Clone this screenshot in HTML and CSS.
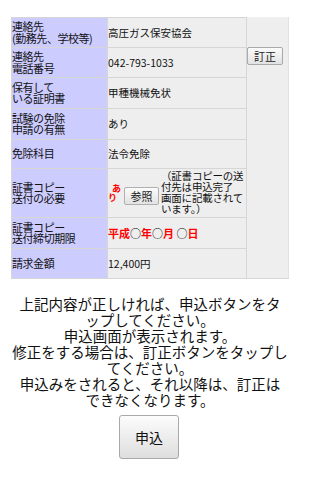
FILE: index.html
```html
<!DOCTYPE html>
<html lang="ja">
<head>
<meta charset="utf-8">
<link rel="stylesheet" href="styles.css">
</head>
<body>
<div class="page">
  <table class="info">
    <tr class="h30">
      <th>連絡先
(勤務先、学校等)</th>
      <td class="val">高圧ガス保安協会</td>
      <td class="side" rowspan="8"><button class="fix">訂正</button></td>
    </tr>
    <tr class="h30">
      <th>連絡先
電話番号</th>
      <td class="val">042-793-1033</td>
    </tr>
    <tr class="h31">
      <th>保有して
いる証明書</th>
      <td class="val">甲種機械免状</td>
    </tr>
    <tr class="h31">
      <th>試験の免除
申請の有無</th>
      <td class="val">あり</td>
    </tr>
    <tr class="h29">
      <th>免除科目</th>
      <td class="val">法令免除</td>
    </tr>
    <tr class="h49">
      <th>証書コピー
送付の必要</th>
      <td class="val">
        <div class="copy">
          <span class="ari">あり</span>
          <button class="ref">参照</button>
          <span class="note">（証書コピーの送
付先は申込完了
画面に記載されて
います。）</span>
        </div>
      </td>
    </tr>
    <tr class="h31">
      <th>証書コピー
送付締切期限</th>
      <td class="val"><span class="date">平成<span class="c">○</span>年<span class="c">○</span>月 <span class="c">○</span>日</span></td>
    </tr>
    <tr class="h30">
      <th>請求金額</th>
      <td class="val">12,400円</td>
    </tr>
  </table>

  <p class="msg">上記内容が正しければ、申込ボタンをタ
ップしてください。
申込画面が表示されます。
修正をする場合は、訂正ボタンをタップし
てください。
申込みをされると、それ以降は、訂正は
できなくなります。</p>

  <div class="actions">
    <button class="apply">申込</button>
  </div>
</div>
</body>
</html>
```

FILE: styles.css
```css
html, body {
  margin: 0;
  padding: 0;
  background: #ffffff;
}
body {
  font-family: "Noto Sans CJK JP", "Noto Sans", sans-serif;
  color: #111;
}
.page {
  width: 300px;
  padding-top: 17px;
}
.info {
  margin-left: 11px;
  border-collapse: collapse;
  width: 277px;
  table-layout: fixed;
  font-size: 10.5px;
  line-height: 12px;
}
.info th, .info td {
  border: 1px solid #d6d6d6;
  padding: 0;
}
.info th {
  width: 95px;
  background: #ccccff;
  font-weight: normal;
  font-size: 11px;
  line-height: 11.5px;
  text-align: left;
  vertical-align: middle;
  white-space: pre;
  letter-spacing: -0.45px;
}
.info td.val {
  width: 138px;
  background: #eeeeee;
  vertical-align: middle;
  white-space: nowrap;
}
.info td.side {
  width: 41px;
  background: #eeeeee;
  vertical-align: top;
  padding-top: 29px;
  border-top-color: #eeeeee;
  border-right-color: #e2e2e2;
}
tr.h29 th, tr.h29 td.val { height: 28px; }
tr.h30 th, tr.h30 td.val { height: 29px; }
tr.h31 th, tr.h31 td.val { height: 30px; }
tr.h49 th, tr.h49 td.val { height: 48px; }

.fix {
  display: block;
  width: 36px;
  height: 18px;
  padding: 0;
  font: inherit;
  font-size: 11px;
  line-height: 16px;
  color: #222;
  background: linear-gradient(#fbfbfb, #e2e2e2);
  border: 1px solid #a9a9a9;
  border-radius: 2px;
}

.copy {
  display: flex;
  align-items: center;
  height: 48px;
}
.ari {
  display: block;
  width: 9px;
  margin-right: 7px;
  white-space: normal;
  text-indent: 4px;
  color: #ff0000;
  font-weight: bold;
  font-size: 9px;
  line-height: 9px;
}
.ref {
  width: 35px;
  height: 18px;
  padding: 0;
  margin: 5px 2px 0 0;
  font: inherit;
  font-size: 11px;
  line-height: 16px;
  color: #222;
  background: linear-gradient(#fbfbfb, #e2e2e2);
  border: 1px solid #b0b0b0;
  border-radius: 2px;
}
.note {
  display: block;
  white-space: pre;
  font-size: 10.5px;
  line-height: 10.8px;
  letter-spacing: -0.2px;
}

.date {
  color: #ff0000;
  font-weight: bold;
  font-size: 11px;
}
.date .c {
  color: #000;
  font-weight: normal;
}

.msg {
  margin: 17px 0 0;
  white-space: pre;
  text-align: center;
  font-size: 14.5px;
  line-height: 16px;
  color: #111;
}

.actions {
  display: flex;
  justify-content: center;
  margin-top: 7px;
}
.apply {
  width: 60px;
  height: 44px;
  margin-left: -2px;
  padding: 0;
  font-family: "Noto Sans CJK JP", sans-serif;
  font-size: 14px;
  color: #111;
  background: linear-gradient(#fcfcfc, #dedede);
  border: 1px solid #a9a9a9;
  border-radius: 3px;
}
```
